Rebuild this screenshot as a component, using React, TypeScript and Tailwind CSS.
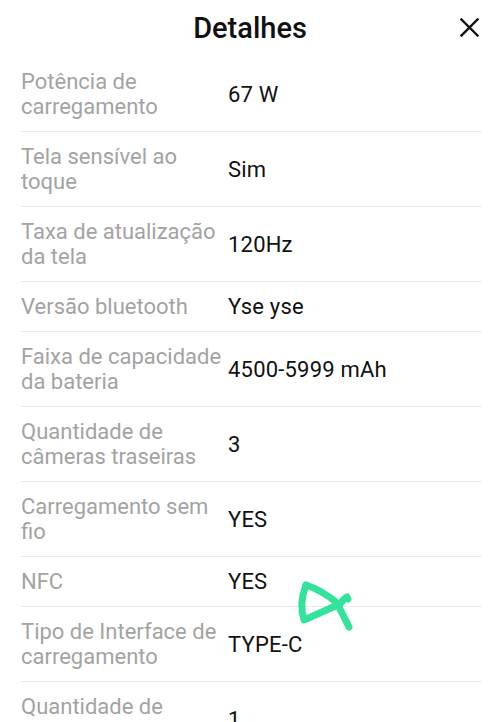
import React from "react";

const rows: [string, string][] = [
  ["Potência de carregamento", "67 W"],
  ["Tela sensível ao toque", "Sim"],
  ["Taxa de atualização da tela", "120Hz"],
  ["Versão bluetooth", "Yse yse"],
  ["Faixa de capacidade da bateria", "4500-5999 mAh"],
  ["Quantidade de câmeras traseiras", "3"],
  ["Carregamento sem fio", "YES"],
  ["NFC", "YES"],
  ["Tipo de Interface de carregamento", "TYPE-C"],
  ["Quantidade de câmeras frontais", "1"],
];

export default function App() {
  return (
    <div
      className="relative w-[500px] h-[722px] overflow-hidden bg-white"
      style={{ fontFamily: "Roboto, 'Noto Sans', sans-serif" }}
    >
      <div className="relative h-[57px] flex items-center justify-center">
        <span className="text-[29px] font-medium text-[#111] leading-none">Detalhes</span>
        <svg
          className="absolute right-[21px] top-[18px]"
          width="19"
          height="19"
          viewBox="0 0 19 19"
        >
          <path d="M1.5 1.5 L17.5 17.5 M17.5 1.5 L1.5 17.5" stroke="#111" strokeWidth="2.4" strokeLinecap="square" />
        </svg>
      </div>
      <div className="pl-[21px] pr-[18px]">
        {rows.map(([k, v], i) => (
          <div key={i} className="flex items-center py-3 border-b border-[#ebebeb]">
            <div className="w-[207px] shrink-0 text-[22px] leading-[25px] text-[#a3a3a3]">{k}</div>
            <div className="text-[22px] leading-[25px] text-[#111] tracking-[0.2px]">{v}</div>
          </div>
        ))}
      </div>
      <svg className="absolute left-0 top-0 pointer-events-none" width="500" height="722">
        <g fill="none" stroke="#33e39b" strokeWidth="7" strokeLinecap="round" strokeLinejoin="round">
          <path d="M306 585 C 301 598 301 611 304 620 L 340 604 C 343 600 345 598 347 597 L 348 599" />
          <path d="M306 585 C 318 589 329 596 337 603 L 349 627" />
        </g>
      </svg>
    </div>
  );
}
